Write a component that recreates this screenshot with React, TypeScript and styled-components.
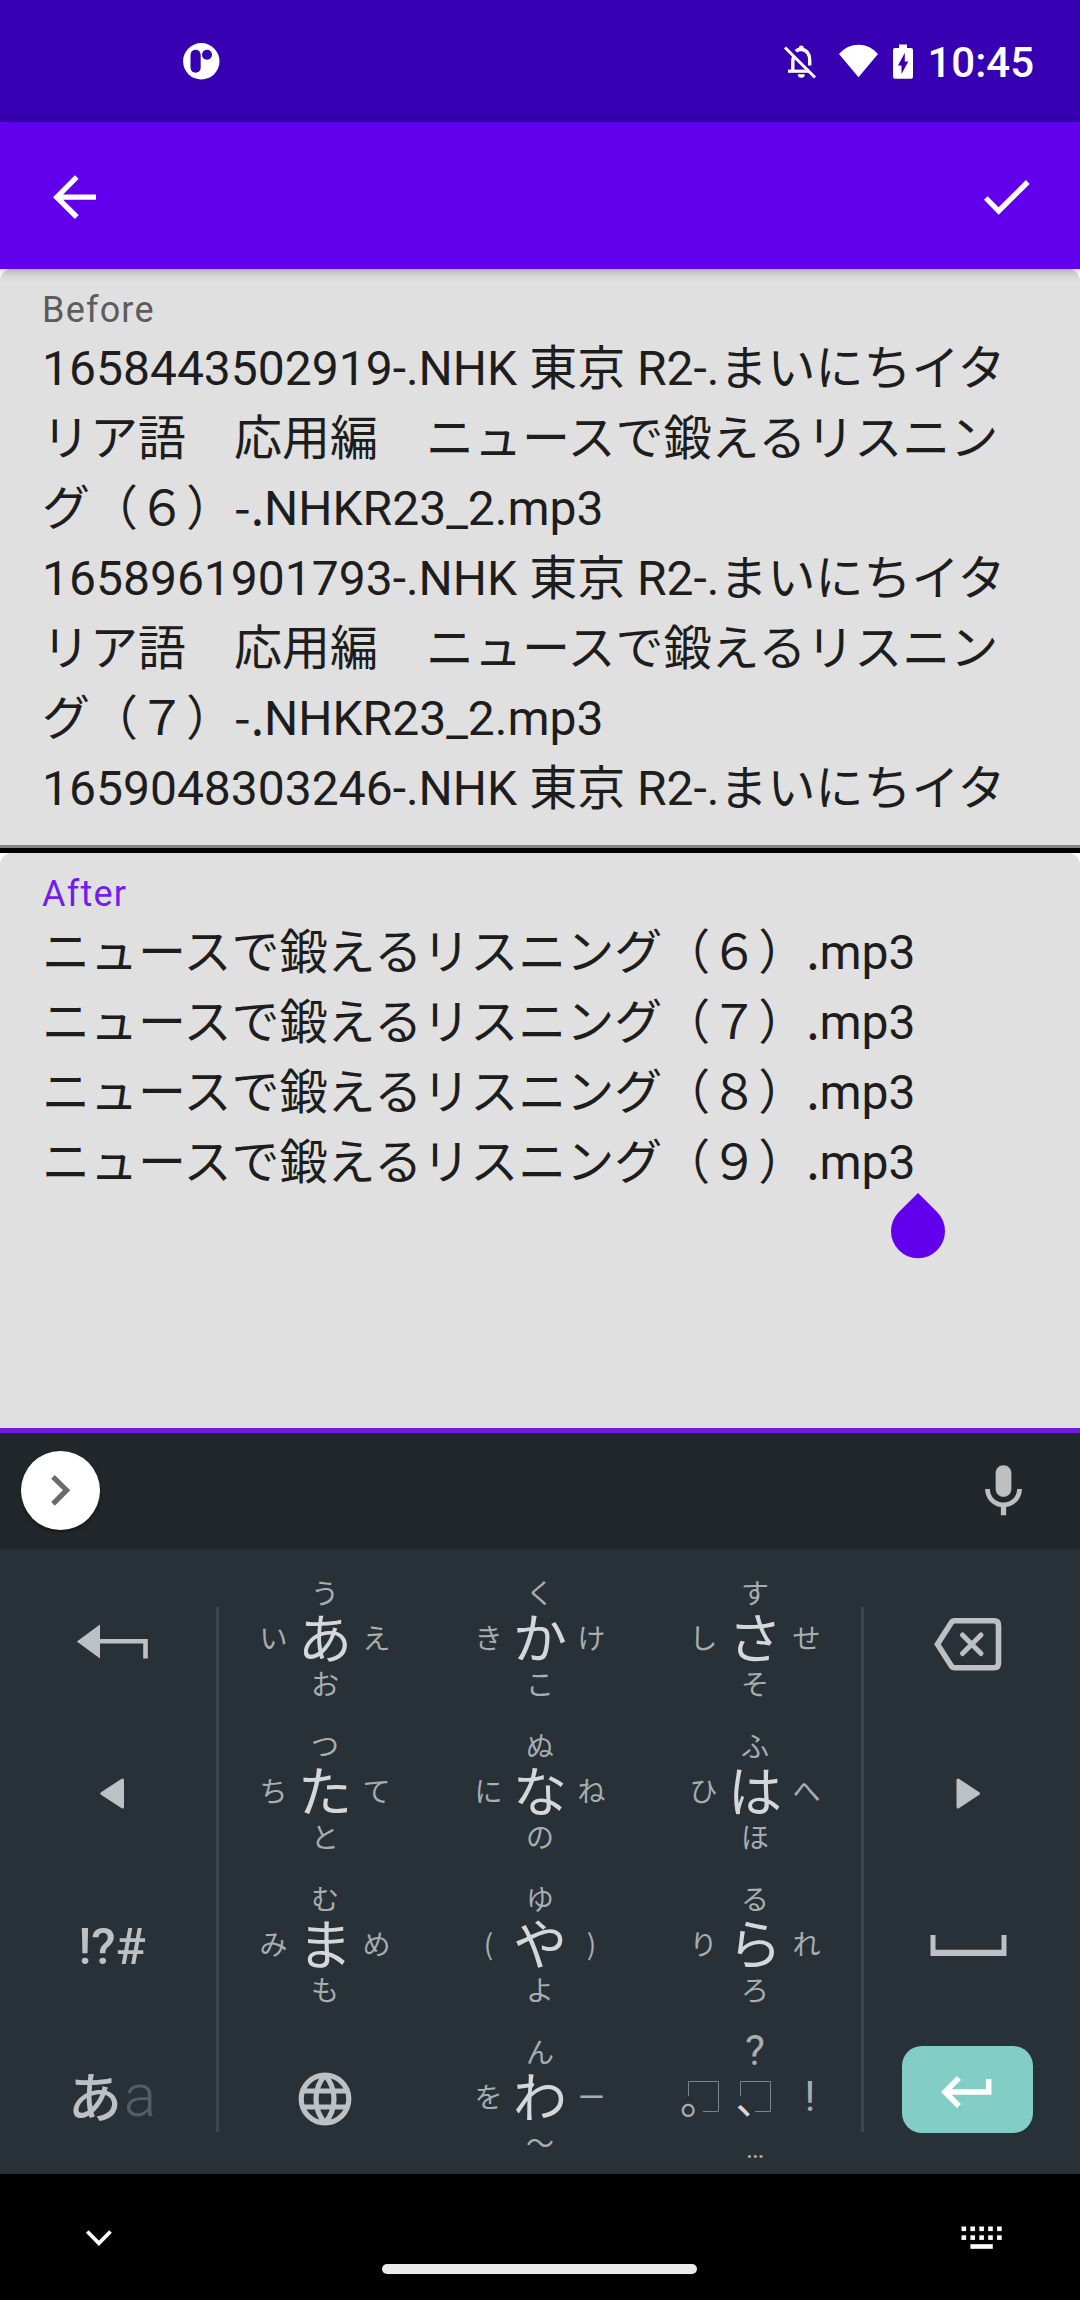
import React from 'react';
import styled, { createGlobalStyle, css } from 'styled-components';

const JP = '"Noto Sans CJK JP", sans-serif';
const LATIN = 'Roboto, "Noto Sans CJK JP", sans-serif';
const ICON = '#bdc1c4';

const GlobalStyle = createGlobalStyle`
  html, body { margin: 0; padding: 0; background: #fff; }
  *, *::before, *::after { box-sizing: border-box; }
  svg { display: block; flex: none; }
`;

const Screen = styled.div`
  width: 1080px;
  height: 2300px;
  display: flex;
  flex-direction: column;
  overflow: hidden;
  background: #fff;
  font-family: ${LATIN};
`;

const StatusBar = styled.header`
  height: 122px;
  flex: none;
  display: flex;
  align-items: center;
  justify-content: space-between;
  padding: 0 46px 0 181px;
  background: #3700b3;
  color: #fff;
`;

const StatusIcons = styled.div`
  display: flex;
  align-items: center;
`;

const Clock = styled.span`
  margin-left: 12px;
  padding-top: 3px;
  font-size: 42px;
  line-height: 50px;
  font-weight: 500;
`;

const AppBar = styled.nav`
  height: 147px;
  flex: none;
  display: flex;
  align-items: center;
  justify-content: space-between;
  padding: 0 41px 0 42px;
  background: #6200ee;
  box-shadow: 0 2px 10px rgba(0, 0, 0, 0.3);
  position: relative;
  z-index: 1;
`;

const Field = styled.section<{ $active?: boolean }>`
  position: relative;
  flex: none;
  height: ${(p) => (p.$active ? 580 : 579)}px;
  padding: 20px 42px 0;
  background: #e0e0e0;
  border-radius: 12px 12px 0 0;
  border-bottom: ${(p) => (p.$active ? '5px solid #701ce2' : '3px solid #838383')};
`;

const Divider = styled.div`
  height: 5px;
  flex: none;
  background: #000;
`;

const FieldLabel = styled.div<{ $active?: boolean }>`
  margin-bottom: 3px;
  font-size: 36px;
  line-height: 42px;
  letter-spacing: 1.2px;
  color: ${(p) => (p.$active ? '#721dec' : '#5c5c5c')};
`;

const Line = styled.div`
  height: 70px;
  font-size: 48px;
  line-height: 70px;
  white-space: pre;
  color: #1d1d1d;
`;

const JpRun = styled.span`
  font-family: ${JP};
  line-height: 1;
`;

const CaretHandle = styled.svg`
  position: absolute;
  left: 891px;
  top: 340px;
`;

const SuggestionBar = styled.div`
  height: 116px;
  flex: none;
  display: flex;
  align-items: center;
  justify-content: space-between;
  padding: 0 45px 0 21px;
  background: #22272b;
`;

const ExpandButton = styled.button`
  width: 79px;
  height: 79px;
  margin: 0 0 2px;
  padding: 0;
  border: 0;
  border-radius: 50%;
  background: #fff;
  box-shadow: 0 2px 4px rgba(0, 0, 0, 0.4);
`;

const Keyboard = styled.main`
  height: 625px;
  flex: none;
  display: flex;
  background: #273137;
`;

const SideKeys = styled.div<{ $side: 'left' | 'right' }>`
  width: 216px;
  display: grid;
  grid-template-rows: repeat(4, 153px);
  place-items: center;
  align-content: start;
  padding-top: 15px;
  ${(p) => (p.$side === 'left' ? css`padding-left: 8px;` : css`padding-right: 9px;`)}
`;

const Rule = styled.div`
  width: 3px;
  height: 525px;
  margin-top: 58px;
  background: #3c464b;
`;

const Pad = styled.div`
  display: grid;
  grid-template-columns: repeat(3, 215px);
  grid-template-rows: repeat(4, 153px);
  margin: 8px -1.5px 0;
`;

const Cell = styled.div`
  display: grid;
  grid-template-columns: 54px 49px 54px;
  grid-template-rows: 38px 46px 51px;
  justify-content: center;
  align-content: start;
  place-items: center;
  padding-top: 16px;
  font-family: ${JP};
  line-height: 1;
`;

const GlobeCell = styled.div`
  display: flex;
  align-items: center;
  justify-content: center;
  padding-top: 13px;
`;

const Flick = styled.span<{ $dir: 'up' | 'left' | 'right' | 'down' }>`
  grid-area: ${(p) => ({ up: '1 / 2', left: '2 / 1', right: '2 / 3', down: '3 / 2' })[p.$dir]};
  padding-top: ${(p) => (p.$dir === 'left' || p.$dir === 'right' ? 5 : 0)}px;
  font-size: 28px;
  line-height: 28px;
  color: #a8adaf;
`;

const Kana = styled.span`
  grid-area: 2 / 2;
  padding-top: 3px;
  font-size: 54px;
  line-height: 46px;
  color: #d6d7d9;
`;

const LatinFlick = styled(Flick)<{ $size: number; $drop: number }>`
  font-family: ${LATIN};
  font-size: ${(p) => p.$size}px;
  padding-top: ${(p) => p.$drop}px;
  padding-left: ${(p) => (p.$dir === 'right' ? 7 : 0)}px;
`;

const Mark = styled.span<{ $col: number; $bright?: boolean }>`
  grid-area: ${(p) => `2 / ${p.$col}`};
  position: relative;
  width: 31px;
  height: 31px;
  margin-top: 6px;
  color: ${(p) => (p.$bright ? '#d6d7d9' : '#a8adaf')};
`;

const MarkGlyph = styled.span<{ $x: number; $y: number; $size: number }>`
  position: absolute;
  left: ${(p) => p.$x}px;
  top: ${(p) => p.$y}px;
  font-size: ${(p) => p.$size}px;
  line-height: 1;
`;

const SymbolsKey = styled.span`
  font-size: 50px;
  font-weight: 500;
  line-height: 60px;
  color: ${ICON};
`;

const ModeKey = styled.span`
  display: flex;
  align-items: baseline;
  margin-bottom: 6px;
  font-family: ${JP};
  font-size: 54px;
  font-weight: 500;
  line-height: 60px;
  color: ${ICON};
`;

const ModeAlt = styled.span`
  position: relative;
  top: -2px;
  margin-left: 2px;
  font-family: ${LATIN};
  font-size: 60px;
  font-weight: 300;
  color: #535d63;
`;

const EnterKey = styled.button`
  width: 131px;
  height: 87px;
  margin: 0 0 20px;
  padding: 0;
  border: 0;
  border-radius: 20px;
  background: #82cdc5;
`;

const NavBar = styled.footer`
  height: 126px;
  flex: none;
  display: grid;
  grid-template-columns: 382px 315px 383px;
  align-items: start;
  background: #000;
`;

const NavSlot = styled.div<{ $side: 'left' | 'right' }>`
  display: flex;
  padding-top: 44px;
  ${(p) => (p.$side === 'left' ? css`padding-left: 79px;` : css`justify-content: flex-end; padding-right: 68px;`)}
`;

const HomePill = styled.div`
  height: 10px;
  margin-top: 90px;
  border-radius: 5px;
  background: #ebebeb;
`;

const before = [
  '1658443502919-.NHK 東京 R2-.まいにちイタ',
  'リア語　応用編　ニュースで鍛えるリスニン',
  'グ（６）-.NHKR23_2.mp3',
  '1658961901793-.NHK 東京 R2-.まいにちイタ',
  'リア語　応用編　ニュースで鍛えるリスニン',
  'グ（７）-.NHKR23_2.mp3',
  '1659048303246-.NHK 東京 R2-.まいにちイタ',
];

const after = ['６', '７', '８', '９'].map((n) => `ニュースで鍛えるリスニング（${n}）.mp3`);

// center, left, up, right, down
const keys = ['あいうえお', 'かきくけこ', 'さしすせそ', 'たちつてと', 'なにぬねの', 'はひふへほ', 'まみむめも', 'や(ゆ)よ', 'らりるれろ'];

// Punctuation that follows a full-width bracket belongs to the Japanese run.
function FileLine({ text }: { text: string }) {
  const match = text.match(/^(.*）-?\.)(.*)$/);
  if (!match) return <Line>{text}</Line>;
  return (
    <Line>
      <JpRun>{match[1]}</JpRun>
      {match[2]}
    </Line>
  );
}

function KanaKey({ chars }: { chars: string }) {
  const [main, left, up, right, down] = Array.from(chars);
  return (
    <Cell>
      <Flick $dir="up">{up}</Flick>
      <Flick $dir="left">{left}</Flick>
      <Kana>{main}</Kana>
      <Flick $dir="right">{right}</Flick>
      <Flick $dir="down">{down}</Flick>
    </Cell>
  );
}

function MarkFrame() {
  return (
    <svg width="31" height="31" fill="none" stroke="#7a8387">
      <path d="M.5 15V.5H30.500V30.500H15" />
    </svg>
  );
}

export default function App() {
  return (
    <Screen lang="ja">
      <GlobalStyle />
      <StatusBar>
        <svg width="40" height="40" viewBox="0 0 40 40">
          <circle cx="20.300" cy="20.300" r="18.200" fill="#fff" />
          <rect x="9.500" y="8.800" width="10.200" height="23" rx="5.100" fill="#3700b3" />
          <circle cx="26" cy="13.800" r="5" fill="#3700b3" />
        </svg>
        <StatusIcons>
          <svg width="40" height="40" viewBox="0 0 40 40" fill="none" stroke="#fff" strokeWidth="3.400">
            <path d="M4 6.500L34 36.500" strokeWidth="3" />
            <path d="M7 30.200H28.500" strokeWidth="3.200" />
            <path d="M11.800 30V20.500Q11.800 17 13.300 14.800" />
            <path d="M14.800 10.200Q17 8.200 20.300 8.200Q28.700 9.500 28.700 19V24.500" />
            <path d="M17.800 7.500V7A2.500 2.500 0 0 1 22.800 7V9H17.800Z" fill="#fff" stroke="none" />
            <path d="M16.800 33.300H23.800A3.500 3.500 0 0 1 16.800 33.300Z" fill="#fff" stroke="none" />
          </svg>
          <svg width="70" height="40" viewBox="0 0 70 40" fill="#fff">
            <path d="M37.500 36.300L18 13Q26 3.800 37.500 3.800T57 13Z" />
          </svg>
          <svg width="24" height="40" viewBox="0 0 24 40">
            <path fill="#fff" d="M8 3.600H16V7H20Q22 7 22 9V35.800Q22 37.800 20 37.800H4Q2 37.800 2 35.800V9Q2 7 4 7H8Z" />
            <path fill="#3700b3" d="M13.800 11.800V20.500H17.300L10.500 33V24.500H7Z" />
          </svg>
          <Clock>10:45</Clock>
        </StatusIcons>
      </StatusBar>

      <AppBar>
        <svg width="64" height="64" viewBox="0 0 64 64" fill="none" stroke="#fff" strokeWidth="5.300">
          <path d="M15 33.200H54M34.800 13L14.800 33.200L34.800 53" />
        </svg>
        <svg width="64" height="64" viewBox="0 0 64 64" fill="none" stroke="#fff" strokeWidth="5.300">
          <path d="M10.800 34L23.700 47L52.800 18" />
        </svg>
      </AppBar>

      <Field>
        <FieldLabel>Before</FieldLabel>
        {before.map((text, i) => (
          <FileLine key={i} text={text} />
        ))}
      </Field>
      <Divider />
      <Field $active>
        <FieldLabel $active>After</FieldLabel>
        {after.map((text) => (
          <FileLine key={text} text={text} />
        ))}
        <CaretHandle width="54" height="66" viewBox="0 0 54 66">
          <path fill="#6200ee" d="M27 0L46.100 19.100A27 27 0 1 1 7.900 19.100Z" />
        </CaretHandle>
      </Field>

      <SuggestionBar>
        <ExpandButton>
          <svg width="79" height="79" fill="none" stroke="#6b6b6b" strokeWidth="5.200">
            <path d="M32 25.800L45.600 39.200L32 52.800" />
          </svg>
        </ExpandButton>
        <svg width="63" height="63" viewBox="0 0 24 24" fill="#bdbfc1">
          <path d="M12 14c1.660 0 3-1.340 3-3V5c0-1.660-1.340-3-3-3S9 3.340 9 5v6c0 1.660 1.340 3 3 3z" />
          <path d="M17.200 11c0 2.870-2.330 5.200-5.200 5.200S6.800 13.870 6.800 11H5c0 3.530 2.610 6.430 6 6.920V21h2v-3.080c3.390-.49 6-3.390 6-6.920z" />
        </svg>
      </SuggestionBar>

      <Keyboard>
        <SideKeys $side="left">
          <svg width="80" height="60" fill={ICON}>
            <path d="M4.800 30.500L28 13.500V28H75.800V47.500H71.200V32.500H28V47.500Z" />
          </svg>
          <svg width="80" height="60" fill={ICON} stroke={ICON} strokeWidth="3" strokeLinejoin="round">
            <path d="M29.800 29.500L50.500 16V43Z" />
          </svg>
          <SymbolsKey>!?#</SymbolsKey>
          <ModeKey>
            あ<ModeAlt>a</ModeAlt>
          </ModeKey>
        </SideKeys>
        <Rule />
        <Pad>
          {keys.map((chars) => (
            <KanaKey key={chars} chars={chars} />
          ))}
          <GlobeCell>
            <svg width="54" height="54" viewBox="-27 -27 54 54" fill="none" stroke={ICON} strokeWidth="5.200">
              <circle r="23.800" />
              <path d="M-23 -8H23M-23 8H23M0 -24C-12 -10 -12 10 0 24M0 -24C12 -10 12 10 0 24" />
            </svg>
          </GlobeCell>
          <KanaKey chars="わをんー〜" />
          <Cell>
            <LatinFlick $dir="up" $size={42} $drop={0}>?</LatinFlick>
            <Mark $col={1}>
              <MarkFrame />
              <MarkGlyph $x={-8} $y={-6} $size={42}>。</MarkGlyph>
            </Mark>
            <Mark $col={2} $bright>
              <MarkFrame />
              <MarkGlyph $x={-4} $y={-6} $size={42}>、</MarkGlyph>
            </Mark>
            <LatinFlick $dir="right" $size={42} $drop={8}>!</LatinFlick>
            <LatinFlick $dir="down" $size={28} $drop={14}>…</LatinFlick>
          </Cell>
        </Pad>
        <Rule />
        <SideKeys $side="right">
          <svg width="80" height="66" fill="none" stroke={ICON} strokeWidth="5.600" strokeLinejoin="round" strokeLinecap="round">
            <path d="M26.500 12.800H66Q70.500 12.800 70.500 17.300V55.200Q70.500 59.700 66 59.700H26.500Q24.500 59.700 23.200 57.700L9.500 36.200L23.200 14.800Q24.500 12.800 26.500 12.800Z" strokeLinejoin="miter" />
            <path d="M34.500 26.900L53 45.500M53 26.900L34.500 45.500" strokeWidth="5" />
          </svg>
          <svg width="80" height="60" fill={ICON} stroke={ICON} strokeWidth="3" strokeLinejoin="round">
            <path d="M50.500 29.500L30 16V43Z" />
          </svg>
          <svg width="80" height="60" fill={ICON}>
            <path d="M2.500 18H7.500V32.700H73.500V18H78.500V39H2.500Z" />
          </svg>
          <EnterKey>
            <svg width="131" height="87" fill="none" stroke="#fff" strokeWidth="5.600">
              <path d="M43 46H86.700V33M57 32L43 46L57 60" />
            </svg>
          </EnterKey>
        </SideKeys>
      </Keyboard>

      <NavBar>
        <NavSlot $side="left">
          <svg width="40" height="40" fill="none" stroke="#fff" strokeWidth="3.800">
            <path d="M8.300 13.500L19.900 25.300L31.500 13.500" />
          </svg>
        </NavSlot>
        <HomePill />
        <NavSlot $side="right">
          <svg width="60" height="40" fill="#fff">
            {[0, 1, 2, 3, 4].map((i) => (
              <React.Fragment key={i}>
                <rect x={9.500 + i * 8.900} y="8.500" width="4.600" height="4.600" />
                <rect x={9.500 + i * 8.900} y="17.300" width="4.600" height="4.600" />
              </React.Fragment>
            ))}
            <rect x="18.400" y="26.200" width="22.400" height="4.600" />
          </svg>
        </NavSlot>
      </NavBar>
    </Screen>
  );
}
